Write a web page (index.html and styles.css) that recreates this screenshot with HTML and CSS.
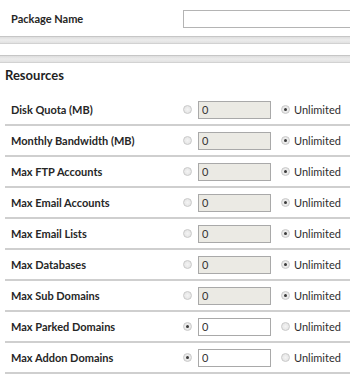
FILE: index.html
```html
<!DOCTYPE html>
<html lang="en">
<head>
    <meta charset="UTF-8">
    <title>Package Resources</title>
    <link rel="stylesheet" href="styles.css">
</head>
<body>
    <div class="name-row">
        <span class="label">Package Name</span>
        <input type="text" class="name-input">
    </div>
    <div class="bar"></div>
    <div class="bar-gap"></div>
    <div class="bar"></div>

    <h2 class="section-title">Resources</h2>

    <div class="resources">
        <div class="row">
            <span class="label">Disk Quota (MB)</span>
            <span class="radio"></span>
            <input type="text" class="num" value="0" disabled>
            <span class="radio checked"></span>
            <span class="unlimited">Unlimited</span>
        </div>
        <div class="row">
            <span class="label">Monthly Bandwidth (MB)</span>
            <span class="radio"></span>
            <input type="text" class="num" value="0" disabled>
            <span class="radio checked"></span>
            <span class="unlimited">Unlimited</span>
        </div>
        <div class="row">
            <span class="label">Max FTP Accounts</span>
            <span class="radio"></span>
            <input type="text" class="num" value="0" disabled>
            <span class="radio checked"></span>
            <span class="unlimited">Unlimited</span>
        </div>
        <div class="row">
            <span class="label">Max Email Accounts</span>
            <span class="radio"></span>
            <input type="text" class="num" value="0" disabled>
            <span class="radio checked"></span>
            <span class="unlimited">Unlimited</span>
        </div>
        <div class="row">
            <span class="label">Max Email Lists</span>
            <span class="radio"></span>
            <input type="text" class="num" value="0" disabled>
            <span class="radio checked"></span>
            <span class="unlimited">Unlimited</span>
        </div>
        <div class="row">
            <span class="label">Max Databases</span>
            <span class="radio"></span>
            <input type="text" class="num" value="0" disabled>
            <span class="radio checked"></span>
            <span class="unlimited">Unlimited</span>
        </div>
        <div class="row">
            <span class="label">Max Sub Domains</span>
            <span class="radio"></span>
            <input type="text" class="num" value="0" disabled>
            <span class="radio checked"></span>
            <span class="unlimited">Unlimited</span>
        </div>
        <div class="row">
            <span class="label">Max Parked Domains</span>
            <span class="radio checked"></span>
            <input type="text" class="num" value="0">
            <span class="radio"></span>
            <span class="unlimited">Unlimited</span>
        </div>
        <div class="row">
            <span class="label">Max Addon Domains</span>
            <span class="radio checked"></span>
            <input type="text" class="num" value="0">
            <span class="radio"></span>
            <span class="unlimited">Unlimited</span>
        </div>
    </div>
</body>
</html>
```

FILE: styles.css
```css
body {
    margin: 0;
    background: #ffffff;
    color: #2b2b2b;
    font-family: Lato, "Open Sans", sans-serif;
    font-size: 11px;
    overflow: hidden;
}
.label {
    font-weight: bold;
    color: #262626;
    flex-shrink: 0;
}
.name-row {
    display: flex;
    align-items: center;
    height: 36px;
    padding-left: 11px;
}
.name-row .label {
    width: 172px;
}
.name-input {
    box-sizing: border-box;
    flex-shrink: 0;
    width: 172px;
    height: 18px;
    margin: 2px 0 0 0;
    border: 1px solid #b4b4b4;
    background: #ffffff;
    padding: 0;
}
.bar {
    height: 6px;
    border-top: 1px solid #c6c6c6;
    background: linear-gradient(#dedede, #ececec 50%, #e2e2e2);
    border-bottom: 1px solid #d2d2d2;
}
.bar-gap {
    height: 11px;
}
.section-title {
    margin: 0;
    height: 32px;
    line-height: 25px;
    padding-left: 5px;
    font-size: 13px;
    font-weight: bold;
    color: #1f1f1f;
}
.resources {
    margin-left: 5px;
}
.row {
    display: flex;
    align-items: center;
    height: 29px;
    border-bottom: 2px solid #cfcfcf;
}
.row .label {
    width: 172px;
    padding-left: 6px;
}
.radio {
    box-sizing: border-box;
    flex-shrink: 0;
    width: 9px;
    height: 9px;
    border-radius: 50%;
    border: 1px solid #c9c9c9;
    background: radial-gradient(circle, #f4f4f4, #e0e0e0);
    position: relative;
}
.radio.checked::after {
    content: "";
    position: absolute;
    left: 2px;
    top: 2px;
    width: 3px;
    height: 3px;
    border-radius: 50%;
    background: #3a3a3a;
}
.num {
    box-sizing: border-box;
    flex-shrink: 0;
    width: 73px;
    height: 18px;
    margin: 0 10px 0 6px;
    padding: 0 0 0 3px;
    border: 1px solid #a9a9a9;
    background: #ffffff;
    font-family: Lato, "Open Sans", sans-serif;
    font-size: 11px;
    color: #333333;
}
.num:disabled {
    background: #ebeae4;
    color: #333333;
}
.unlimited {
    margin-left: 4px;
    color: #2e2e2e;
    white-space: nowrap;
}
```
